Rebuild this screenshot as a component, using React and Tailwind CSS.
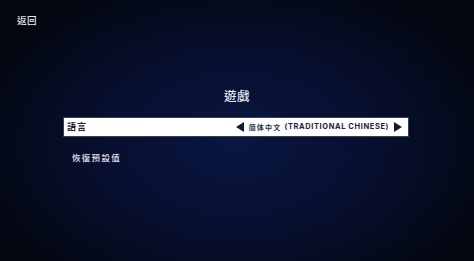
export default function App() {
  const cjk = { fontFamily: '"Noto Sans CJK TC", "Noto Sans CJK SC", sans-serif' };
  return (
    <div
      className="w-[474px] h-[261px] overflow-hidden flex flex-col text-white bg-[radial-gradient(ellipse_60%_70%_at_50%_55%,#0a1642_0%,#071031_45%,#03060e_100%)]"
      style={cjk}
    >
      <div className="pt-[13px] pl-[17px] text-[9.5px] leading-[14px] tracking-[0.5px] font-medium text-[#e8eaf2]">返回</div>
      <div className="mt-[61px] flex justify-center text-[12.5px] leading-[16px] tracking-[0.5px] font-medium text-[#e6e9f3]">遊戲</div>
      <div className="mt-[13px] ml-[63px] w-[346px] h-[20px] bg-white border border-[#3a3f55] flex items-center pl-[3px] pr-[6px] text-[#1a1f38]">
        <span className="text-[9px] leading-[10px] font-bold tracking-[1px]">語言</span>
        <div className="ml-auto flex items-center">
          <svg width="8" height="10" viewBox="0 0 8 10" className="mr-[5px]">
            <polygon points="8,0 8,10 0,5" fill="#161b33" />
          </svg>
          <span className="text-[7px] leading-[10px] font-bold tracking-[1.2px] text-[#2a2f48]">简体中文</span>
          <span
            className="ml-[3px] text-[7.5px] leading-[10px] font-bold tracking-[0.6px] text-[#1e2340]"
            style={{ fontFamily: 'Inter, "DejaVu Sans", sans-serif' }}
          >
            (TRADITIONAL CHINESE)
          </span>
          <svg width="8" height="10" viewBox="0 0 8 10" className="ml-[5px]">
            <polygon points="0,0 0,10 8,5" fill="#161b33" />
          </svg>
        </div>
      </div>
      <div className="mt-[14px] ml-[72px] text-[8.5px] leading-[12px] tracking-[1.3px] font-medium text-[#e3e6f0]">恢復預設值</div>
    </div>
  );
}
